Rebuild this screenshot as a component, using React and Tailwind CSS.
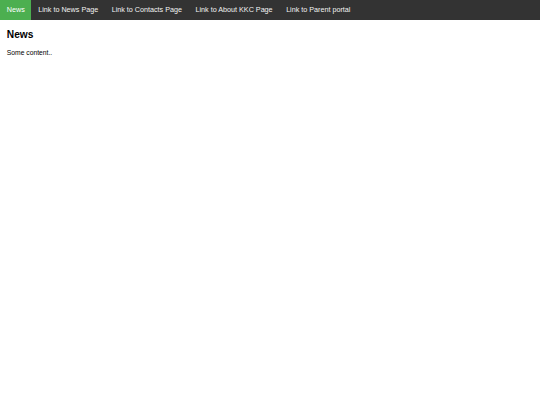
import React from 'react';

const links = [
  'Link to News Page',
  'Link to Contacts Page',
  'Link to About KKC Page',
  'Link to Parent portal',
];

const App = () => {
  return (
    <div className="min-h-screen bg-white text-black" style={{ fontFamily: '"Liberation Sans", Arial, sans-serif' }}>
      {/* Top navigation */}
      <div className="flex bg-[#333333] h-[20px]">
        <a className="block bg-[#4CAF50] text-white px-[6.75px] text-[7.2px] leading-[20px]">News</a>
        {links.map((label) => (
          <a key={label} className="block text-[#f2f2f2] px-[6.75px] text-[7.2px] leading-[20px]">
            {label}
          </a>
        ))}
      </div>

      {/* Content */}
      <div className="px-[6.8px]">
        <h2 className="font-bold text-[10.2px] leading-[11.8px] pt-[9px] mb-[8.6px]">News</h2>
        <p className="text-[6.75px] leading-[7.9px]">Some content..</p>
      </div>
    </div>
  );
};

export default App;
